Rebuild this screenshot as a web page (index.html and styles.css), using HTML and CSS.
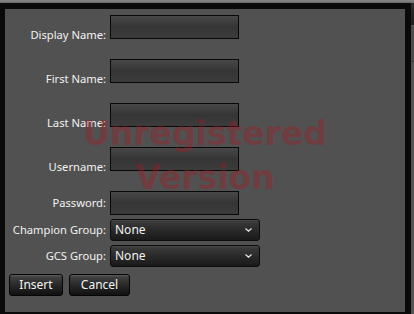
FILE: index.html
```html
<!DOCTYPE html>
<html lang="en">
<head>
    <meta charset="UTF-8">
    <title>Insert User</title>
<link rel="stylesheet" href="styles.css">
</head>
<body>

<div class="window">
    <div class="content">
        <form class="user-form">
            <div class="row text-row">
                <label for="display-name">Display Name:</label>
                <input type="text" id="display-name" class="field">
            </div>
            <div class="row text-row">
                <label for="first-name">First Name:</label>
                <input type="text" id="first-name" class="field">
            </div>
            <div class="row text-row">
                <label for="last-name">Last Name:</label>
                <input type="text" id="last-name" class="field">
            </div>
            <div class="row text-row">
                <label for="username">Username:</label>
                <input type="text" id="username" class="field">
            </div>
            <div class="row pass-row">
                <label for="password">Password:</label>
                <input type="password" id="password" class="field">
            </div>
            <div class="row select-row">
                <label>Champion Group:</label>
                <div class="combo">
                    <span>None</span>
                    <svg class="chevron" width="7" height="4" viewBox="0 0 7 4"><path d="M0.5 0.5 L3.5 3.2 L6.5 0.5" fill="none" stroke="#e8e8e8" stroke-width="1.2"/></svg>
                </div>
            </div>
            <div class="row select-row">
                <label>GCS Group:</label>
                <div class="combo">
                    <span>None</span>
                    <svg class="chevron" width="7" height="4" viewBox="0 0 7 4"><path d="M0.5 0.5 L3.5 3.2 L6.5 0.5" fill="none" stroke="#e8e8e8" stroke-width="1.2"/></svg>
                </div>
            </div>
            <div class="buttons">
                <button type="button" class="btn btn-insert">Insert</button>
                <button type="button" class="btn btn-cancel">Cancel</button>
            </div>
        </form>
    </div>
    <div class="watermark">Unregistered<br>Version</div>
</div>

</body>
</html>
```

FILE: styles.css
```css
body {
  margin: 0;
  height: 314px;
  overflow: hidden;
  font-family: "Noto Sans", Arial, sans-serif;
  font-size: 11.2px;
  color: #f2f2f2;
  background: linear-gradient(to bottom, #888 0, #6a6a6a 3px, #2e2e2e 3px, #1c1c1c 25px, #6a6a6a 25px, #4c4c4c 26px, #4c4c4c 61px, #222 61px, #545454 62px, #545454 100%);
}

.window {
  position: relative;
  margin-top: 3px;
  width: 400px;
  height: 303px;
  border-style: solid;
  border-color: #0a0a0a;
  border-width: 6px 6px 2px 5px;
  background-color: #515151;
}

.content {
  padding-top: 6px;
}

.row {
  display: flex;
}

.row label {
  width: 101px;
  text-align: right;
  line-height: 16px;
}

.text-row {
  margin-bottom: 20px;
}

.text-row label {
  align-self: flex-end;
  margin-bottom: -4px;
}

.pass-row {
  margin-bottom: 4px;
  align-items: center;
}

.field {
  margin: 0 0 0 4px;
  width: 129px;
  height: 24px;
  box-sizing: border-box;
  border: 1px solid #080808;
  background: linear-gradient(to bottom, #484848 0, #353535 50%, #3c3c3c 100%);
  color: #fff;
  outline: none;
}

.select-row {
  align-items: center;
  margin-bottom: 4px;
}

.combo {
  margin-left: 4px;
  width: 150px;
  height: 22px;
  box-sizing: border-box;
  border: 1px solid #0c0c0c;
  border-radius: 3px;
  background: linear-gradient(to bottom, #4a4a4a 0, #393939 10%, #262626 60%, #1a1a1a 100%);
  display: flex;
  align-items: center;
  justify-content: space-between;
  padding: 0 7px 0 4px;
  font-size: 12px;
  line-height: 16px;
}

.buttons {
  display: flex;
  gap: 6px;
  margin-top: 7px;
  padding-left: 4px;
}

.btn {
  height: 22px;
  padding: 0;
  border: 1px solid #050505;
  border-radius: 3px;
  background: linear-gradient(to bottom, #5a5a5a 0, #3e3e3e 12%, #262626 55%, #111 100%);
  color: #f4f4f4;
  font-family: "Noto Sans", Arial, sans-serif;
  font-size: 12px;
  line-height: 16px;
}

.btn-insert {
  width: 54px;
}

.btn-cancel {
  width: 61px;
}

.watermark {
  position: absolute;
  left: 0;
  right: 0;
  top: 103px;
  text-align: center;
  font-family: "DejaVu Sans", Verdana, sans-serif;
  font-weight: bold;
  font-size: 33px;
  line-height: 44px;
  color: rgba(170, 20, 30, 0.35);
  pointer-events: none;
}
```
